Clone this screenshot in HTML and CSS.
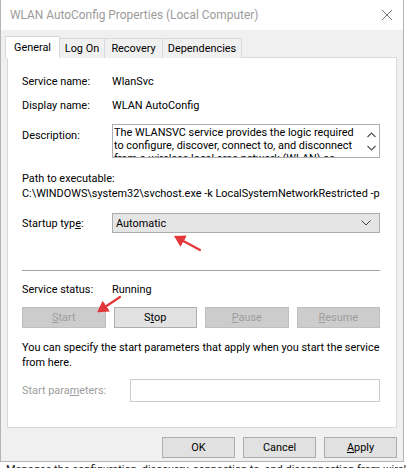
FILE: index.html
```html
<!DOCTYPE html>
<html lang="en">
<head>
    <meta charset="UTF-8">
    <meta name="viewport" content="width=device-width, initial-scale=1.0">
    <title>WLAN AutoConfig Properties</title>
    <link rel="stylesheet" href="styles.css">
</head>
<body>
    <div class="window">
        <div class="titlebar">
            <span class="title">WLAN AutoConfig Properties (Local Computer)</span>
            <svg class="close" width="12" height="12" viewBox="0 0 12 12">
                <path d="M1 1 L11 11 M11 1 L1 11" stroke="#6e6e6e" stroke-width="1" fill="none"/>
            </svg>
        </div>
        <div class="client">
            <div class="tabs">
                <div class="tab selected tab-general">General</div>
                <div class="tab tab-logon">Log On</div>
                <div class="tab tab-recovery">Recovery</div>
                <div class="tab tab-deps">Dependencies</div>
            </div>
            <div class="panel">
                <div class="row first">
                    <span class="label">Service name:</span>
                    <span class="value">WlanSvc</span>
                </div>
                <div class="row second">
                    <span class="label">Display name:</span>
                    <span class="value">WLAN AutoConfig</span>
                </div>
                <div class="row desc-row">
                    <span class="label desc-label">Description:</span>
                    <div class="desc-box">
                        <div class="desc-text">The WLANSVC service provides the logic required to configure, discover, connect to, and disconnect from a wireless local area network (WLAN) as defined by IEEE 802.11 standards.</div>
                        <div class="desc-scroll">
                            <svg width="9" height="6" viewBox="0 0 9 6"><path d="M0.5 5 L4.5 1 L8.5 5" stroke="#555" stroke-width="1.2" fill="none"/></svg>
                            <svg width="9" height="6" viewBox="0 0 9 6"><path d="M0.5 1 L4.5 5 L8.5 1" stroke="#555" stroke-width="1.2" fill="none"/></svg>
                        </div>
                    </div>
                </div>
                <div class="path-block">
                    <div>Path to executable:</div>
                    <div>C:\WINDOWS\system32\svchost.exe -k LocalSystemNetworkRestricted -p</div>
                </div>
                <div class="row startup-row">
                    <span class="label">Startup typ<u>e</u>:</span>
                    <div class="select">
                        <span>Automatic</span>
                        <svg width="10" height="6" viewBox="0 0 10 6"><path d="M0.5 0.5 L5 5 L9.5 0.5" stroke="#444" stroke-width="1" fill="none"/></svg>
                    </div>
                </div>
                <div class="separator"></div>
                <div class="row status-row">
                    <span class="label">Service status:</span>
                    <span class="value">Running</span>
                </div>
                <div class="service-buttons">
                    <div class="btn disabled"><u>S</u>tart</div>
                    <div class="btn">S<u>t</u>op</div>
                    <div class="btn disabled"><u>P</u>ause</div>
                    <div class="btn disabled"><u>R</u>esume</div>
                </div>
                <p class="hint">You can specify the start parameters that apply when you start the service from here.</p>
                <div class="row params-row">
                    <span class="label params-label">Start para<u>m</u>eters:</span>
                    <div class="params-input"></div>
                </div>
            </div>
            <div class="dialog-buttons">
                <div class="btn">OK</div>
                <div class="btn">Cancel</div>
                <div class="btn"><u>A</u>pply</div>
            </div>
        </div>
    </div>
    <div class="behind">
        <span>Manages the configuration, discovery, connection to, and disconnection from wireless networks</span>
    </div>

    <!-- annotation arrows drawn over the dialog -->
    <svg class="arrows" width="406" height="468" viewBox="0 0 406 468">
        <defs>
            <marker id="head" markerWidth="6" markerHeight="6" refX="4" refY="3" orient="auto" markerUnits="strokeWidth">
                <path d="M0 0 L5 3 L0 6 Z" fill="#e2383a"/>
            </marker>
        </defs>
        <line x1="200" y1="250" x2="176" y2="237" stroke="#e2383a" stroke-width="2.2" stroke-linecap="round" marker-end="url(#head)"/>
        <line x1="120" y1="297" x2="99" y2="311" stroke="#e2383a" stroke-width="2.2" stroke-linecap="round" marker-end="url(#head)"/>
    </svg>
</body>
</html>
```

FILE: styles.css
```css
body {
    margin: 0;
    padding: 0;
    width: 406px;
    height: 468px;
    overflow: hidden;
    background: #ffffff;
    font-family: "Segoe UI", Roboto, sans-serif;
    font-size: 10.9px;
    color: #000;
    position: relative;
}
.window {
    width: 402px;
    height: 461px;
    border: 1px solid #b4b4b4;
    border-top: none;
    background: #f0f0f0;
    display: flex;
    flex-direction: column;
}
.titlebar {
    height: 30px;
    background: #ffffff;
    display: flex;
    align-items: center;
    justify-content: space-between;
    padding: 0 8px 0 9px;
}
.title {
    font-size: 11.9px;
    color: #9b9b9b;
}
.close {
    margin-right: 2px;
}
.client {
    flex: 1;
    padding: 7px 6px 0 6px;
    display: flex;
    flex-direction: column;
}
.tabs {
    display: flex;
    height: 21px;
    align-items: flex-end;
    margin-left: -2px;
    position: relative;
    z-index: 1;
}
.tab {
    height: 19px;
    line-height: 19px;
    text-align: center;
    border: 1px solid #d9d9d9;
    border-bottom: none;
    border-left: none;
    background: #f0f0f0;
}
.tab.selected {
    height: 21px;
    line-height: 22px;
    background: #ffffff;
    border-left: 1px solid #d9d9d9;
}
.tab-general {
    width: 53px;
}
.tab-logon {
    width: 44px;
}
.tab-recovery {
    width: 57px;
}
.tab-deps {
    width: 78px;
}
.panel {
    background: #ffffff;
    border: 1px solid #d9d9d9;
    height: 371px;
    margin-top: -1px;
    padding: 16px 16px 0 14px;
    box-sizing: border-box;
}
.row {
    display: flex;
    align-items: center;
    line-height: 15px;
}
.label {
    width: 90px;
    flex: none;
}
.second {
    margin-top: 9px;
}
.desc-row {
    margin-top: 11px;
    align-items: flex-start;
}
.desc-label {
    padding-top: 4px;
}
.desc-box {
    flex: 1;
    height: 34px;
    border: 1px solid #abadb3;
    box-sizing: border-box;
    display: flex;
    overflow: hidden;
}
.desc-text {
    flex: 1;
    padding: 1px 0 0 1px;
    line-height: 13px;
}
.desc-scroll {
    width: 15px;
    display: flex;
    flex-direction: column;
    align-items: center;
    justify-content: space-around;
    padding: 3px 0;
}
.path-block {
    margin-top: 13px;
    line-height: 15px;
    white-space: nowrap;
}
.startup-row {
    margin-top: 12px;
}
.select {
    flex: 1;
    height: 20px;
    box-sizing: border-box;
    background: #e5e5e5;
    border: 1px solid #acacac;
    display: flex;
    align-items: center;
    justify-content: space-between;
    padding: 0 8px 0 3px;
}
.separator {
    margin-top: 37px;
    height: 1px;
    background: #a0a0a0;
}
.status-row {
    margin-top: 11px;
}
.service-buttons {
    margin-top: 10px;
    display: grid;
    grid-template-columns: repeat(4, 1fr);
    column-gap: 8px;
}
.btn {
    height: 21px;
    box-sizing: border-box;
    background: #e1e1e1;
    border: 1px solid #adadad;
    display: flex;
    align-items: center;
    justify-content: center;
}
.btn.disabled {
    background: #cccccc;
    border-color: #bfbfbf;
    color: #9d9d9d;
}
.hint {
    margin: 12px 0 0 0;
    line-height: 15px;
}
.params-row {
    margin-top: 9px;
}
.params-label {
    width: 108px;
    color: #9d9d9d;
}
.params-input {
    flex: 1;
    height: 23px;
    box-sizing: border-box;
    border: 1px solid #cccccc;
    background: #ffffff;
}
.dialog-buttons {
    margin-top: 9px;
    display: flex;
    justify-content: flex-end;
    gap: 8px;
}
.dialog-buttons .btn {
    width: 73px;
}
.behind {
    height: 6px;
    overflow: hidden;
    padding-left: 6px;
    white-space: nowrap;
    font-size: 11px;
    line-height: 15px;
    color: #222;
}
.arrows {
    position: absolute;
    left: 0;
    top: 0;
    pointer-events: none;
}
```
